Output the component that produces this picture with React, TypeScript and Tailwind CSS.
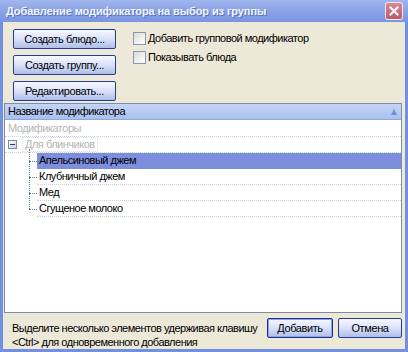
import React from 'react';

const font = { fontFamily: '"Liberation Sans", Arial, sans-serif' };

const XpButton = ({ label, w, isDefault }: { label: string; w: string; isDefault?: boolean }) => (
    <div
        className={`${w} h-[20px] shrink-0 flex items-center justify-center rounded-[2px] border ${isDefault ? 'border-[#1c2f8c] shadow-[inset_0_0_0_1px_#8fa5e8]' : 'border-[#2a3b93]'} bg-linear-to-b from-[#f7f9ff] via-[#d9e1fa] to-[#aebee9] text-[11px] tracking-[-0.4px] text-black`}
    >
        {label}
    </div>
);

const Check = ({ label }: { label: string }) => (
    <div className="flex items-center gap-[2px] h-[13px]">
        <div className="w-[13px] h-[13px] border border-[#8597bd] bg-linear-to-br from-[#dcdcd6] to-[#ffffff]" />
        <span className="text-[11px] tracking-[-0.5px] text-black leading-none">{label}</span>
    </div>
);

const children = ['Апельсиновый джем', 'Клубничный джем', 'Мед', 'Сгущеное молоко'];

export default function App() {
    return (
        <div style={font} className="w-[408px] h-[352px] flex flex-col bg-[#7390e0]">
            {/* title bar */}
            <div className="h-[22px] shrink-0 flex items-center justify-between pl-[6px] pr-[5px] bg-linear-to-b from-[#a2b6ee] via-[#8aa3e6] to-[#7a95e2]">
                <span className="text-[11px] font-bold tracking-[-0.1px] text-[#f4f6ff] whitespace-nowrap [text-shadow:1px_1px_0_#5b72b8]">
                    Добавление модификатора на выбор из группы
                </span>
                <div className="w-[18px] h-[18px] shrink-0 rounded-[3px] border border-white/80 bg-linear-to-b from-[#d88a96] to-[#b85a6a] flex items-center justify-center">
                    <svg width="10" height="10" viewBox="0 0 10 10">
                        <path d="M1.5 1.5 L8.5 8.5 M8.5 1.5 L1.5 8.5" stroke="white" strokeWidth="2" strokeLinecap="square" />
                    </svg>
                </div>
            </div>

            {/* body */}
            <div className="flex-1 mx-[3px] mb-[3px] bg-[#ece9d8] flex flex-col">
                <div className="flex shrink-0 pt-[7px] pl-[10px] h-[81px]">
                    <div className="flex flex-col gap-[6px]">
                        <XpButton label="Создать блюдо..." w="w-[103px]" />
                        <XpButton label="Создать группу..." w="w-[103px]" />
                        <XpButton label="Редактировать..." w="w-[103px]" />
                    </div>
                    <div className="flex flex-col gap-[6px] ml-[17px] pt-[3px]">
                        <Check label="Добавить групповой модификатор" />
                        <Check label="Показывать блюда" />
                    </div>
                </div>

                {/* list */}
                <div className="shrink-0 ml-[1px] mr-[3px] h-[210px] border border-[#7f8fa8] bg-white flex flex-col text-[11px] tracking-[-0.5px]">
                    <div className="h-[16px] flex items-center justify-between px-[3px] bg-linear-to-b from-[#c4d4f6] to-[#a9c0ee] border-b border-[#8ea8dc]">
                        <span className="text-black">Название модификатора</span>
                        <svg width="8" height="8" viewBox="0 0 8 8">
                            <path d="M4 1 L7 7 L1 7 Z" fill="#6f8fd8" />
                        </svg>
                    </div>
                    <div className="h-[16px] mt-[1px] flex items-center pl-[3px] border-b border-dotted border-[#c5d3f0] text-[#b5b5b5]">
                        Модификаторы
                    </div>
                    <div className="h-[16px] flex items-center border-b border-dotted border-[#c5d3f0]">
                        <div className="ml-[3px] w-[9px] h-[9px] border border-[#7b8cb0] bg-linear-to-br from-white to-[#c8d0e0] flex items-center justify-center">
                            <div className="w-[5px] h-[1px] bg-[#2a3a70]" />
                        </div>
                        <div className="ml-[5px] h-[15px] flex items-center px-[2px] border border-dotted border-[#d8dfee] text-[#b5b5b5]">
                            Для блинчиков
                        </div>
                    </div>
                    <div className="relative flex flex-col">
                        <div className="absolute left-[24px] top-[-4px] h-[60px] border-l border-dotted border-[#5a70a8]" />
                        {children.map((c, i) => (
                            <div key={c} className="h-[16px] flex items-center">
                                <div className="w-[24px] shrink-0" />
                                <div className="w-[8px] shrink-0 border-t border-dotted border-[#5a70a8]" />
                                <div
                                    className={`flex-1 h-full flex items-center pl-[2px] border-b border-dotted ${i === 0 ? 'bg-[#7d8fdc] border-[#7d8fdc]' : 'border-[#c5d3f0]'} text-black`}
                                >
                                    {c}
                                </div>
                            </div>
                        ))}
                    </div>
                </div>

                {/* footer */}
                <div className="flex items-start justify-between pl-[9px] pr-[3px] pt-[5px]">
                    <div className="text-[11px] tracking-[-0.5px] leading-[14px] text-black pt-[3px] whitespace-nowrap">
                        <div>Выделите несколько элементов удерживая клавишу</div>
                        <div>&lt;Ctrl&gt; для одновременного добавления</div>
                    </div>
                    <div className="flex gap-[5px]">
                        <XpButton label="Добавить" w="w-[66px]" isDefault />
                        <XpButton label="Отмена" w="w-[64px]" />
                    </div>
                </div>
            </div>
        </div>
    );
}
